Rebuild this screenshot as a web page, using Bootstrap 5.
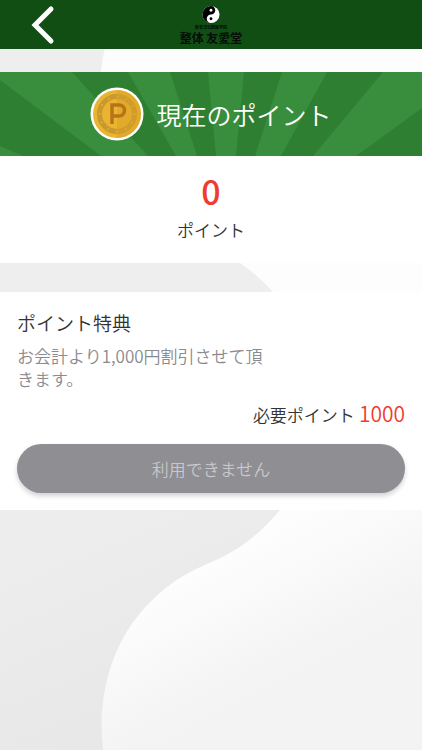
<!DOCTYPE html>
<html lang="ja">
<head>
<meta charset="utf-8">
<meta name="viewport" content="width=device-width, initial-scale=1">
<title>現在のポイント</title>
<link href="https://cdn.jsdelivr.net/npm/bootstrap@5.3.0/dist/css/bootstrap.min.css" rel="stylesheet">
<style>
body { font-family: "Noto Sans CJK JP", sans-serif; font-weight: 350; color: #333; background: #f3f3f3; }
.backdrop { z-index: -1; }
.topbar { background: #104e14; height: 49px; }
.topbar-side { width: 86px; }
.brand { color: #050f06; line-height: 1; padding-top: 5px; }
.brand-sub { font-size: 4px; line-height: 6px; font-weight: 700; }
.brand-name { font-size: 12px; line-height: 16px; font-weight: 700; }
.hero { height: 84px; margin-top: 23px; background: #388e3c; }
.hero-title { font-size: 25px; line-height: 36px; font-weight: 350; margin-left: 12px; }
.score { height: 107px; padding-top: 11px; }
.score-value { font-size: 34px; line-height: 48px; font-weight: 500; color: #f23b30; }
.score-unit { font-size: 17px; line-height: 30px; }
.benefit { margin-top: 29px; padding: 17px 17px; }
.benefit-title { font-size: 19px; line-height: 28px; font-weight: 350; }
.benefit-text { font-size: 17px; line-height: 23px; color: #8a8a8f; width: 66%; margin-top: 7px; }
.need { font-size: 17px; line-height: 32px; margin-top: 7px; }
.need-value { font-size: 21px; color: #f23b30; }
.use-btn, .use-btn:disabled { height: 49px; margin-top: 13px; font-size: 17px; font-weight: 350; color: #c8c8cb; background: #8e8e93; border: 0; opacity: 1; box-shadow: 0 3px 5px rgba(0, 0, 0, .18); }
</style>
</head>
<body class="position-relative min-vh-100 overflow-x-hidden">
<svg class="backdrop position-absolute top-0 start-0 w-100 h-100" viewBox="0 0 422 750" preserveAspectRatio="none" aria-hidden="true">
  <defs>
    <linearGradient id="shade" gradientUnits="userSpaceOnUse" x1="60" y1="480" x2="170" y2="750"><stop offset="0" stop-color="#eee"/><stop offset="1" stop-color="#e7e7e7"/></linearGradient>
    <linearGradient id="light" gradientUnits="userSpaceOnUse" x1="220" y1="560" x2="282" y2="680"><stop offset="0" stop-color="#fdfdfd"/><stop offset="1" stop-color="#f3f3f3"/></linearGradient>
  </defs>
  <path d="M0 0H422V750H0Z" fill="url(#shade)"/>
  <path d="M422 0H120Q103 45 101 72C100 150 150 220 240 263Q258 275 273 292C330 360 330 450 280 510C260 534 237 552 207 564C180 575 157 592 137 617C111 650 97 698 103 750H422Z" fill="url(#light)"/>
</svg>

<header class="topbar d-flex justify-content-between">
  <div class="topbar-side d-flex align-items-center justify-content-center">
    <a href="#" class="d-flex" aria-label="戻る">
      <svg width="24" height="40" viewBox="0 0 24 40" fill="none" stroke="#fff" stroke-width="5" stroke-linecap="round" stroke-linejoin="miter"><path d="M20 4L4 20L20 36"/></svg>
    </a>
  </div>
  <div class="brand d-flex flex-column align-items-center">
    <svg width="20" height="19" viewBox="0 0 20 20" aria-hidden="true">
      <circle cx="10" cy="10" r="9" fill="#fff"/>
      <path d="M10 1A9 9 0 0 0 10 19A4.500 4.500 0 0 1 10 10A4.500 4.500 0 0 0 10 1Z" fill="#000"/>
      <circle cx="10" cy="5.500" r="1.500" fill="#fff"/><circle cx="10" cy="14.500" r="1.500" fill="#000"/>
    </svg>
    <span class="brand-sub">新東洋伝統医学院</span>
    <span class="brand-name">整体 友愛堂</span>
  </div>
  <div class="topbar-side"></div>
</header>

<main>
  <section class="hero position-relative">
    <svg class="position-absolute top-0 start-0 w-100 h-100" viewBox="0 0 422 84" preserveAspectRatio="none" fill="#2f7f33" aria-hidden="true">
      <path d="M0 8L101 84H23L0 74ZM72 0H128L176 84H148ZM170 0H208L216 84H197ZM244 0H282L255 84H236ZM327 0H383L313 84H281ZM422 36V84H356Z"/>
    </svg>
    <div class="position-relative d-flex h-100 align-items-center justify-content-center">
      <svg width="54" height="54" viewBox="0 0 54 54" aria-hidden="true">
        <circle cx="27" cy="27" r="26.500" fill="#fff"/>
        <circle cx="27" cy="27" r="24" fill="#e9b430"/>
        <circle cx="27" cy="27" r="17.500" fill="none" stroke="#c9992d" stroke-width="5"/>
        <circle cx="27" cy="27" r="17.500" fill="none" stroke="#e3b544" stroke-width="1.800" stroke-linecap="round" stroke-dasharray="0 9.163"/>
        <path d="M27 3A24 24 0 0 1 27 51Z" fill="#d9a026" opacity=".5"/>
        <path d="M22 37V18H29A5 5 0 0 1 29 29H22" fill="none" stroke="#b87318" stroke-width="3.500"/>
      </svg>
      <h1 class="hero-title text-white mb-0">現在のポイント</h1>
    </div>
  </section>

  <section class="score bg-white text-center">
    <div class="score-value">0</div>
    <div class="score-unit">ポイント</div>
  </section>

  <section class="benefit bg-white">
    <h2 class="benefit-title mb-0">ポイント特典</h2>
    <p class="benefit-text mb-0">お会計より1,000円割引させて頂きます。</p>
    <div class="need d-flex justify-content-end align-items-baseline gap-1">
      <span>必要ポイント</span><span class="need-value">1000</span>
    </div>
    <button type="button" class="use-btn btn rounded-pill w-100" disabled>利用できません</button>
  </section>
</main>
<script src="https://cdn.jsdelivr.net/npm/bootstrap@5.3.0/dist/js/bootstrap.bundle.min.js"></script>
</body>
</html>
